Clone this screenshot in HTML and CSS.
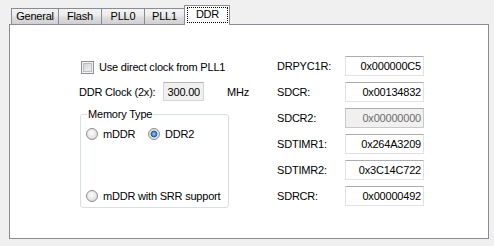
FILE: index.html
```html
<!DOCTYPE html>
<html>
<head>
    <title>DDR Settings</title>
    <link rel="stylesheet" href="styles.css">
</head>
<body>
    <div class="tabs">
        <div class="tab tab-general">General</div>
        <div class="tab tab-flash">Flash</div>
        <div class="tab tab-pll0">PLL0</div>
        <div class="tab tab-pll1">PLL1</div>
        <div class="tab tab-ddr selected"><span class="focus">DDR</span></div>
    </div>

    <div class="panel">
        <div class="left-col">
            <div class="check-row">
                <span class="checkbox"></span>
                <span>Use direct clock from PLL1</span>
            </div>
            <div class="clock-row">
                <span class="clock-label">DDR Clock (2x):</span>
                <input class="field clock-field" value="300.00" readonly>
                <span class="unit">MHz</span>
            </div>
            <fieldset class="memory-type">
                <legend>Memory Type</legend>
                <div class="radio-row">
                    <label class="radio-item mddr"><span class="radio"></span>mDDR</label>
                    <label class="radio-item"><span class="radio checked"></span>DDR2</label>
                </div>
                <div class="radio-row srr">
                    <label class="radio-item"><span class="radio"></span>mDDR with SRR support</label>
                </div>
            </fieldset>
        </div>

        <div class="right-col">
            <div class="reg-row"><span class="reg-label">DRPYC1R:</span><input class="field reg-field" value="0x000000C5"></div>
            <div class="reg-row"><span class="reg-label">SDCR:</span><input class="field reg-field" value="0x00134832"></div>
            <div class="reg-row"><span class="reg-label">SDCR2:</span><input class="field reg-field" value="0x00000000" disabled></div>
            <div class="reg-row"><span class="reg-label">SDTIMR1:</span><input class="field reg-field" value="0x264A3209"></div>
            <div class="reg-row"><span class="reg-label">SDTIMR2:</span><input class="field reg-field" value="0x3C14C722"></div>
            <div class="reg-row"><span class="reg-label">SDRCR:</span><input class="field reg-field" value="0x00000492"></div>
        </div>
    </div>
</body>
</html>
```

FILE: styles.css
```css
body {
    margin: 0;
    background-color: #f0f0f0;
    font-family: "Liberation Sans", Arial, sans-serif;
    font-size: 11px;
    letter-spacing: -0.2px;
    color: #000;
}
.tabs {
    display: flex;
    align-items: flex-end;
    height: 24px;
    padding-left: 11px;
}
.tab {
    box-sizing: border-box;
    height: 16px;
    margin-left: -1px;
    border: 1px solid #898c95;
    border-bottom: none;
    background: linear-gradient(#f3f3f3 0%, #ebebeb 45%, #dedede 55%, #d0d0d0 100%);
    text-align: center;
    line-height: 15px;
}
.tab-general { width: 48px; margin-left: 0; }
.tab-flash { width: 44px; }
.tab-pll0 { width: 44px; }
.tab-pll1 { width: 41px; }
.tab-ddr { width: 46px; }
.tab.selected {
    height: 20px;
    margin-bottom: -1px;
    background: #fff;
    position: relative;
    z-index: 1;
}
.focus {
    display: block;
    box-sizing: border-box;
    height: 16px;
    margin: 1px 1px 0 2px;
    border: 1px dotted #000;
    line-height: 13px;
}
.panel {
    box-sizing: border-box;
    display: flex;
    width: 480px;
    height: 215px;
    margin-left: 9px;
    padding-top: 31px;
    border: 1px solid #898c95;
    background-color: #fff;
}
.left-col {
    width: 198px;
    margin-left: 69px;
}
.check-row {
    display: flex;
    align-items: center;
    height: 22px;
}
.checkbox {
    box-sizing: border-box;
    width: 13px;
    height: 13px;
    margin: 0 5px 0 2px;
    border: 1px solid #8e8f8f;
    background: linear-gradient(135deg, #cdd0d4, #f7f7f7);
    box-shadow: inset 0 0 0 1px #f4f4f4, inset 0 0 0 2px #b9bcc0;
}
.clock-row {
    display: flex;
    align-items: center;
    height: 19px;
    margin-top: 4px;
}
.clock-label {
    width: 84px;
}
.field {
    box-sizing: border-box;
    margin: 0;
    padding: 0 2px 0 2px;
    border: 1px solid #e2e3ea;
    border-top-color: #abadb3;
    background-color: #fff;
    font-family: "Liberation Sans", Arial, sans-serif;
    font-size: 11px;
    letter-spacing: -0.2px;
    color: #000;
    text-align: right;
    outline: none;
}
.clock-field {
    width: 41px;
    height: 19px;
    padding-right: 3px;
    background-color: #f0f0f0;
    border-color: #d5d5d5;
    border-top-color: #b5b5b5;
}
.unit {
    margin-left: 23px;
}
.memory-type {
    box-sizing: border-box;
    width: 149px;
    margin: 7px 0 0 1px;
    padding: 0 0 1px 5px;
    border: 1px solid #d5dfe5;
    border-radius: 3px;
}
.memory-type legend {
    margin-left: 1px;
    padding: 0 1px;
    line-height: 13px;
}
.radio-row {
    display: flex;
    align-items: center;
    height: 20px;
    margin-top: 3px;
}
.radio-row.srr {
    margin-top: 42px;
}
.radio-item {
    display: flex;
    align-items: center;
}
.radio-item.mddr {
    width: 62px;
}
.radio {
    box-sizing: border-box;
    width: 12px;
    height: 12px;
    margin-right: 5px;
    border: 1px solid #8f8f8f;
    border-radius: 50%;
    background: radial-gradient(circle at 45% 40%, #fdfdfd 0%, #e6e6e6 55%, #c8c8c8 100%);
}
.radio.checked {
    background: radial-gradient(circle at 50% 50%, #8fd0f7 0%, #3f86c4 30%, #1b4f86 45%, #e8e8e8 52%, #d0d0d0 100%);
}
.right-col {
    margin-left: 0;
}
.reg-row {
    display: flex;
    align-items: center;
    height: 20px;
    margin-bottom: 6px;
}
.reg-label {
    width: 68px;
}
.reg-field {
    width: 79px;
    height: 20px;
}
.reg-field:disabled {
    background-color: #f0f0f0;
    border-color: #c9c9c9;
    border-top-color: #adadad;
    color: #6d6d6d;
}
```
